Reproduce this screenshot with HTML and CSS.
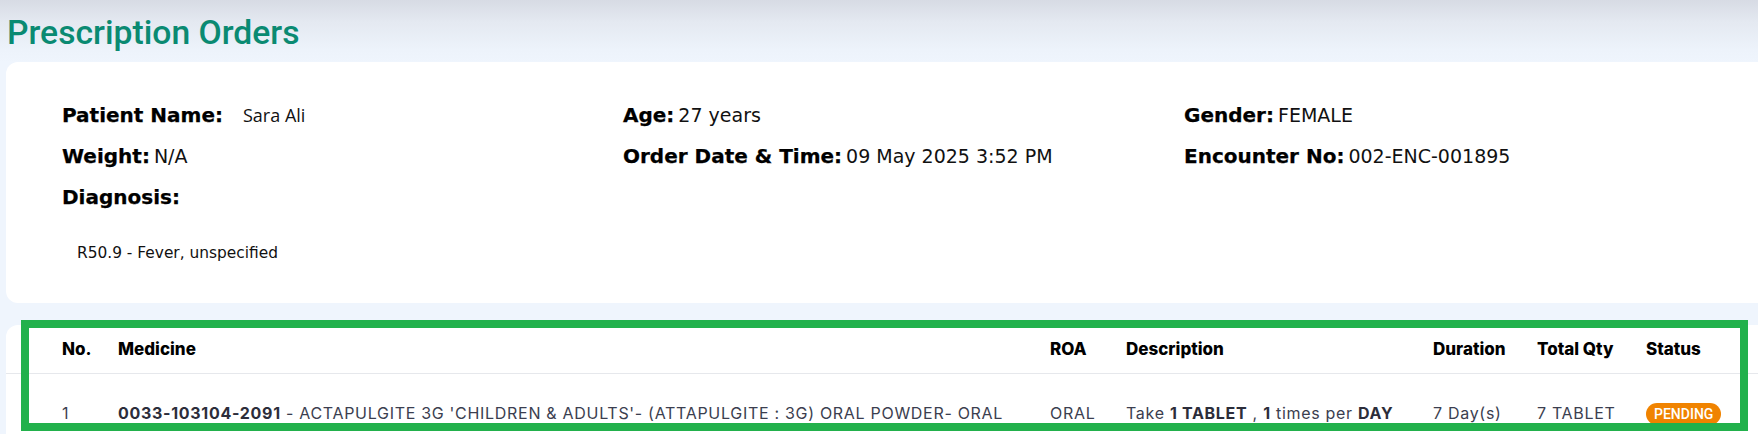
FILE: index.html
```html
<!doctype html>
<html>
<head>
    <meta charset="utf-8">
    <title>Prescription Orders</title>
    <link rel="stylesheet" href="styles.css">
</head>
<body>
<div class="page">
	<h1 class="page-title">Prescription Orders</h1>

	<section class="card patient-card">
		<div class="info-grid">
			<div class="info"><span class="info-label">Patient Name:</span><span class="info-value name-value">Sara Ali</span></div>
			<div class="info"><span class="info-label">Age:</span> <span class="info-value">27 years</span></div>
			<div class="info"><span class="info-label">Gender:</span> <span class="info-value">FEMALE</span></div>
			<div class="info"><span class="info-label">Weight:</span> <span class="info-value">N/A</span></div>
			<div class="info"><span class="info-label">Order Date &amp; Time:</span> <span class="info-value">09 May 2025 3:52 PM</span></div>
			<div class="info"><span class="info-label">Encounter No:</span> <span class="info-value">002-ENC-001895</span></div>
			<div class="info"><span class="info-label">Diagnosis:</span></div>
		</div>
		<ul class="diagnosis-list">
			<li>R50.9 - Fever, unspecified</li>
		</ul>
	</section>

	<section class="card orders-card">
		<table class="orders">
			<colgroup>
				<col class="c-no">
				<col class="c-med">
				<col class="c-roa">
				<col class="c-desc">
				<col class="c-dur">
				<col class="c-qty">
				<col class="c-status">
			</colgroup>
			<thead>
				<tr>
					<th>No.</th>
					<th>Medicine</th>
					<th>ROA</th>
					<th>Description</th>
					<th>Duration</th>
					<th>Total Qty</th>
					<th>Status</th>
				</tr>
			</thead>
			<tbody>
				<tr>
					<td>1</td>
					<td><b>0033-103104-2091</b> - ACTAPULGITE 3G 'CHILDREN &amp; ADULTS'- (ATTAPULGITE : 3G) ORAL POWDER- ORAL</td>
					<td>ORAL</td>
					<td>Take <b>1 TABLET</b> , <b>1</b> times per <b>DAY</b></td>
					<td>7 Day(s)</td>
					<td>7 TABLET</td>
					<td><span class="badge pending">PENDING</span></td>
				</tr>
			</tbody>
		</table>
		<div class="highlight"></div>
	</section>
</div>
</body>
</html>
```

FILE: styles.css
```css
*{margin: 0;padding: 0;box-sizing: border-box;list-style: none;}
html,body{height: 100%;}
body{
	background: linear-gradient(#d7dbe4 0, #e4e9f1 22px, #edf3fb 50px, #eff5fd 62px) no-repeat, #eff5fd;
	overflow: hidden;
	color: #000;
}
.page{
	padding-left: 6px;
}
.page-title{
	font-family: Roboto, "Liberation Sans", sans-serif;
	font-weight: 500;
	font-size: 33.7px;
	line-height: 39px;
	color: #0a8a72;
	padding-top: 13px;
	padding-left: 1px;
}

.card{
	background: #fff;
	border-radius: 12px 0 0 12px;
}

/* patient info */
.patient-card{
	margin-top: 10px;
	padding: 33px 13px 40px 56px;
}
.info-grid{
	display: grid;
	grid-template-columns: repeat(3, 1fr);
	grid-auto-rows: 41px;
}
.info{
	line-height: 41px;
	white-space: nowrap;
}
.info-label{
	font-family: "DejaVu Sans", sans-serif;
	font-weight: bold;
	font-size: 20px;
	-webkit-text-stroke: 0.25px #000;
}
.info-value{
	font-family: "DejaVu Sans", sans-serif;
	font-size: 19px;
	color: #111;
}
.name-value{
	font-family: "Open Sans", sans-serif;
	font-size: 18px;
	margin-left: 20px;
}
.diagnosis-list{
	margin-top: 25px;
	padding-left: 15px;
}
.diagnosis-list li{
	font-family: "DejaVu Sans", sans-serif;
	font-size: 15.4px;
	line-height: 20px;
	color: #111;
}

/* orders table */
.orders-card{
	position: relative;
	margin-top: 22px;
	height: 140px;
}
.orders{
	width: 100%;
	table-layout: fixed;
	border-collapse: collapse;
	font-family: Inter, "Liberation Sans", sans-serif;
}
.c-no{width: 100px;}
.c-med{width: 932px;}
.c-roa{width: 76px;}
.c-desc{width: 307px;}
.c-dur{width: 104px;}
.c-qty{width: 109px;}
.c-status{width: 124px;}

.orders th{
	text-align: left;
	font-weight: 800;
	font-size: 17px;
	line-height: 20px;
	color: #000;
	padding: 14px 12px 14px;
	border-bottom: 1px solid #e6e8ec;
	white-space: nowrap;
}
.orders td{
	font-size: 16px;
	line-height: 20px;
	color: #3b3e4f;
	padding: 27px 12px 14px;
	white-space: nowrap;
	letter-spacing: 0.7px;
}
.orders th:first-child,
.orders td:first-child{
	padding-left: 56px;
}
.orders td b{
	font-weight: 700;
	color: #2c2d3a;
}

.badge{
	display: inline-block;
	height: 22px;
	line-height: 22px;
	padding: 0 8px;
	border-radius: 11px;
	font-family: Roboto, "Liberation Sans", sans-serif;
	font-size: 14px;
	font-weight: 500;
	letter-spacing: 0;
	color: #fff;
	vertical-align: -2px;
}
.badge.pending{
	background: #f08300;
}

/* green marker drawn over the table */
.highlight{
	position: absolute;
	left: 15px;
	top: -5px;
	width: 1727px;
	height: 111px;
	border: 8px solid #22b14c;
	pointer-events: none;
}
```
